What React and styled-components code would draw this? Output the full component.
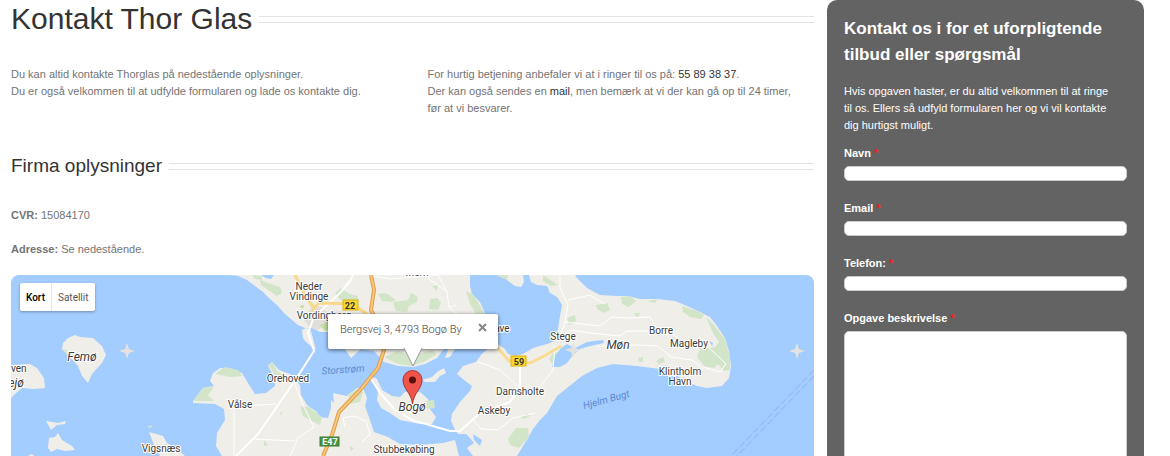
import React from "react";
import styled, { createGlobalStyle } from "styled-components";

const places = [
  { name: "Neder", x: 309, y: 290 },
  { name: "Vindinge", x: 309, y: 300 },
  { name: "Vordingborg", x: 324, y: 319 },
  { name: "Orehoved", x: 288, y: 382 },
  { name: "Vålse", x: 240, y: 408 },
  { name: "Vigsnæs", x: 161, y: 452 },
  { name: "Stubbekøbing", x: 404, y: 453 },
  { name: "Kalvehave", x: 487, y: 332 },
  { name: "Mern", x: 417, y: 276 },
  { name: "Stege", x: 563, y: 340 },
  { name: "Damsholte", x: 520, y: 395 },
  { name: "Askeby", x: 494, y: 414 },
  { name: "Borre", x: 661, y: 334 },
  { name: "Magleby", x: 689, y: 347 },
  { name: "Klintholm", x: 680, y: 375 },
  { name: "Havn", x: 680, y: 385 },
  { name: "Fejø", x: 13, y: 387, island: true },
  { name: "Raven", x: 13, y: 372 },
  { name: "Femø", x: 82, y: 361, island: true },
  { name: "Bogø", x: 412, y: 411, island: true },
  { name: "Møn", x: 618, y: 349, island: true },
];

const stars = [
  [127, 351],
  [797, 351],
  [573, 350],
];

const fields = [
  { id: "navn", label: "Navn", type: "text" },
  { id: "email", label: "Email", type: "email" },
  { id: "telefon", label: "Telefon:", type: "tel" },
];

const MapDrawing = () => (
  <Drawing viewBox="11 275 803 300" preserveAspectRatio="xMinYMin slice">
    <g fill="#f0eee9">
      <path d="M230 275L238 276L247 280L255 286L263 292L270 299L277 305L284 313L292 320L298 325L305 328L312 328L320 332L329 332L336 318L345 349L351 358L361 349L374 351L384 362L398 366L413 367L425 364L437 358L443 350L446 348L448 350L445 358L450 357L455 349L468 330L480 314L485 313L480 302L472 294L470 286L470 275Z" />
      <path d="M302 330L306 328L310 329L312 335L316 350L312 347L306 342L303 338Z" />
      <path d="M498 344L487 349L481 355L476 362L463 366L457 374L464 380L472 386L470 391L460 402L452 414L451 421L455 430L458 434L466 434L470 438L474 443L467 448L473 456L480 580L517 580L517 456L523 446L528 438L533 429L540 420L547 413L557 396L567 388L582 376L597 368L613 364L637 366L660 369L677 376L690 383L697 386L707 388L722 386L729 378L731 366L729 351L725 338L717 326L710 317L700 312L687 306L675 301L657 299L640 299L628 296L617 296L600 295L587 288L577 278L575 275L529 275L531 282L537 285L547 286L550 293L557 297L562 305L560 316L558 329L555 341L547 344L533 348L523 354L515 356L508 354L505 349Z" />
      <path d="M503 275L508 281L515 286L521 287L524 282L523 275Z" />
      <path d="M371 376L377 379L382 390L392 396L400 397L405 392L420 392L428 399L430 409L436 417L432 424L420 424L400 420L390 413L381 408L377 400L378 392Z" />
      <path d="M422 380L432 377L437 372L444 368L446 373L440 376L435 382L425 382Z" />
      <path d="M193 401L203 388L214 386L210 381L213 373L220 368L233 369L242 373L248 383L255 394L266 393L275 386L275 378L268 366L272 362L279 370L290 374L300 385L301 395L307 405L317 412L319 417L328 418L331 408L331 400L334 403L333 393L347 396L357 388L363 388L367 398L365 406L370 420L374 432L388 437L400 444L420 445L443 443L455 440L459 456L459 580L222 580L222 456L216 446L217 433L225 420L224 409L215 404L193 403Z" />
      <path d="M63 343L68 338L75 335L80 337L93 338L102 346L106 355L102 363L92 374L88 383L82 376L78 366L68 355L62 349Z" />
      <path d="M11 365L30 364L37 368L44 378L45 388L34 389L22 388L15 394L11 398Z" />
      <path d="M46 421L58 423L66 421L65 424L57 425L51 430Z" />
      <path d="M49 438L55 437L58 433L62 440L72 446L75 450L65 451L57 449L51 452L48 448Z" />
      <path d="M149 432L156 434L163 436L167 443L177 449L185 456L195 580L160 580L160 456L154 445Z" />
      <path d="M28 456L32 454L34 456Z" />
    </g>
    <path
      fill="#e2dfda"
      d="M304 320L312 306L322 307L330 315L326 327L316 330L309 327Z"
    />
    <g fill="#d3e5c9">
      <path d="M260 280L268 283L280 287L282 293L277 296L268 290L261 285ZM252 275L262 276L262 280L255 279Z" />
      <path d="M335 293L341 288L350 294L358 296L358 300L346 301L339 299Z" />
      <path d="M378 294L386 293L396 300L392 302L382 301ZM393 302L408 300L411 293L418 297L417 302L409 306L407 312L396 311ZM430 299L437 298L441 303L438 310L429 309Z" />
      <path d="M466 291L473 294L478 302L485 314L476 314L470 304ZM432 286L438 285L437 291ZM496 275L508 275L507 280Z" />
      <path d="M384 357L398 351L412 356L432 350L437 354L424 362L412 366L398 364Z" />
      <path d="M215 374L225 367L238 370L242 376L230 377L221 375Z" />
      <path d="M193 401L203 388L214 387L208 395L214 401Z" />
      <path d="M268 364L273 363L277 371L288 378L284 380L274 374Z" />
      <path d="M300 406L309 407L322 417L320 425L308 419L303 416Z" />
      <path d="M348 394L358 389L363 392L360 402L350 404ZM280 413L283 411L281 416ZM264 440L268 445L264 446Z" />
      <path d="M425 401L434 400L435 408L427 409ZM349 446L354 448L351 451Z" />
      <path d="M508 439L516 428L528 428L529 437L519 448L510 445Z" />
      <path d="M520 417L527 413L530 416L524 419ZM553 353L560 352L552 364L549 359Z" />
      <path d="M567 318L575 315L576 321L569 325ZM596 305L607 303L610 310L604 313L597 309Z" />
      <path d="M621 297L630 296L636 301L629 307L622 304ZM647 301L658 299L655 303ZM634 313L640 313L638 318Z" />
      <path d="M682 306L697 311L704 315L701 319L690 317L683 312Z" />
      <path d="M706 317L714 325L725 339L730 356L730 370L724 371L718 364L714 368L704 366L697 357L700 349L715 347L719 342L713 333Z" />
      <path d="M656 361L663 357L665 362L659 364ZM638 358L643 357L643 362L639 362Z" />
      <path d="M62 349L67 350L68 354ZM147 427L152 425L151 428Z" />
      <path d="M543 275L558 285L551 286L543 281Z" />
    </g>
    <path
      fill="#c5dfa0"
      d="M320 325L328 322L331 328L325 331ZM299 306L304 305L303 309ZM313 315L317 314L316 318Z"
    />
    <g fill="#a3ccff">
      <path d="M552 367L555 356L561 348L567 344L575 348L587 342L603 340L604 343L590 346L580 349L573 355L567 363L560 367Z" />
      <path d="M473 434L482 440L480 446L474 440ZM549 314L547 304L552 311Z" />
      <path d="M261 275L274 275L271 279L266 278ZM709 341L713 343L712 346Z" />
    </g>
    <g fill="none" stroke="#fff" strokeLinejoin="round">
      <path
        strokeWidth="2"
        d="M236 456L258 434L294 382L314 351L308 333L314 317L340 293L350 281L353 275"
      />
      <path d="M294 382L303 405L314 427L298 438L290 456M254 439L295 441M234 409L234 456M242 406L276 404M345 427L343 418L354 416L366 421L370 434L362 442" />
      <path d="M370 275L390 279L438 275L447 292L449 307L462 318M447 292L428 278M449 307L456 305" />
      <path strokeWidth="2" d="M371 379L381 394L395 410L412 420L450 431L460 431L480 413L510 402L520 388L520 367" />
      <path d="M472 418L481 429L498 430L513 418L535 413M520 388L500 370L478 362M555 346L553 370L535 393" />
      <path d="M560 337L565 322L568 305L560 288L560 275M568 300L590 295L605 304M563 336L570 330L590 333L620 336L627 331L652 331L670 332L682 341L707 346L720 358L726 364L720 372L703 367" />
      <path d="M565 322L600 326L612 317L627 318L650 317L656 326M596 347L615 345L640 345L658 346L671 357L692 360L703 369" />
    </g>
    <g fill="none" strokeLinejoin="round">
      <path stroke="#f9d887" strokeWidth="3" d="M295 275L306 297L314 308L319 303L352 304L367 314M314 308L313 317" />
      <path stroke="#f9dc91" strokeWidth="3" d="M494 344L503 354L509 361L530 363L546 355L561 346" />
      <path stroke="#df9d4e" strokeWidth="4" d="M371 275L374 290L371 310L381 330L384 350L378 368L361 389L339 412L332 435L323 456" />
      <path stroke="#fac678" strokeWidth="2" d="M371 275L374 290L371 310L381 330L384 350L378 368L361 389L339 412L332 435L323 456" />
    </g>
    <g fill="none" stroke="#8eb1f1" strokeDasharray="7 3">
      <path d="M814 370L731 456" />
      <path d="M814 376L737 456" />
    </g>
    <g fill="#e4e2df">
      {stars.map(([x, y]) => (
        <path
          key={x}
          transform={`translate(${x} ${y})`}
          d="M0 -8L2 -2L8 0L2 2L0 8L-2 2L-8 0L-2 -2Z"
        />
      ))}
    </g>
    <g stroke="#d9b310">
      <rect x="343" y="300" width="15" height="10" fill="#fbd72b" />
      <rect x="511" y="356" width="15" height="10" fill="#fbd72b" />
      <rect x="320" y="437" width="19" height="9" fill="#4b9541" stroke="#3c7d34" />
    </g>
    <RoadNumber x="350" y="309">22</RoadNumber>
    <RoadNumber x="519" y="365">59</RoadNumber>
    <RoadNumber x="330" y="445" $light>E47</RoadNumber>
    {places.map((place) => (
      <Place key={place.name} x={place.x} y={place.y} $island={place.island}>
        {place.name}
      </Place>
    ))}
    <Sea x="343" y="373" transform="rotate(-4 343 369)">
      Storstrøm
    </Sea>
    <Sea x="606" y="403" transform="rotate(-15 606 399)">
      Hjelm Bugt
    </Sea>
    <path
      d="M412.500 404C411.500 393 403 389 403 380A9.500 9.500 0 0 1 422 380C422 389 413.500 393 412.500 404Z"
      fill="#f0534a"
      stroke="#a8352e"
    />
    <circle cx="412.500" cy="380" r="3.500" fill="#5b0f0d" />
  </Drawing>
);

const App = () => {
  return (
    <Page>
      <GlobalStyle />
      <Main>
        <TitleRow>
          <Title>Kontakt Thor Glas</Title>
          <Lines />
        </TitleRow>
        <Columns>
          <Text>
            Du kan altid kontakte Thorglas på nedestående oplysninger.
            <br />
            Du er også velkommen til at udfylde formularen og lade os kontakte dig.
          </Text>
          <Text>
            For hurtig betjening anbefaler vi at i ringer til os på:{" "}
            <Link href="tel:55893837">55 89 38 37</Link>.
            <br />
            Der kan også sendes en <Link href="#mail">mail</Link>, men bemærk at vi
            der kan gå op til 24 timer,
            <br />
            før at vi besvarer.
          </Text>
        </Columns>
        <SubtitleRow>
          <Subtitle>Firma oplysninger</Subtitle>
          <Lines />
        </SubtitleRow>
        <Facts>
          <Text>
            <strong>CVR:</strong> 15084170
          </Text>
          <Text>
            <strong>Adresse:</strong> Se nedestående.
          </Text>
        </Facts>
        <Map>
          <MapDrawing />
          <MapTypes>
            <MapType $active>Kort</MapType>
            <MapType>Satellit</MapType>
          </MapTypes>
          <Bubble>
            Bergsvej 3, 4793 Bogø By
            <Close aria-label="Luk">
              <svg width="9" height="9" viewBox="0 0 9 9">
                <path d="M1 1L8 8M8 1L1 8" stroke="#888" strokeWidth="2" />
              </svg>
            </Close>
            <Tail width="20" height="20" viewBox="0 0 20 20">
              <path d="M1 0L10 18L19 0" fill="#fff" stroke="#999" />
            </Tail>
          </Bubble>
        </Map>
      </Main>
      <Sidebar>
        <SidebarTitle>Kontakt os i for et uforpligtende tilbud eller spørgsmål</SidebarTitle>
        <Intro>
          Hvis opgaven haster, er du altid velkommen til at ringe
          <br />
          til os. Ellers så udfyld formularen her og vi vil kontakte
          <br />
          dig hurtigst muligt.
        </Intro>
        <Form>
          {fields.map((field) => (
            <Field key={field.id}>
              <Label htmlFor={field.id}>
                {field.label} <Required>*</Required>
              </Label>
              <Input id={field.id} type={field.type} />
            </Field>
          ))}
          <Field>
            <Label htmlFor="opgave">
              Opgave beskrivelse <Required>*</Required>
            </Label>
            <TextArea id="opgave" />
          </Field>
        </Form>
      </Sidebar>
    </Page>
  );
};

const GlobalStyle = createGlobalStyle`
  * {
    box-sizing: border-box;
  }

  body {
    margin: 0;
    background: #fff;
    color: #747474;
    font-family: "Liberation Sans", Arial, sans-serif;
    font-size: 11px;
    line-height: 17px;
  }
`;

const Page = styled.div`
  display: grid;
  grid-template-columns: minmax(0, 1fr) 317px;
  gap: 13px;
  padding: 0 26px 0 11px;
  height: 100vh;
  overflow: hidden;
`;

const Main = styled.main``;

const TitleRow = styled.div`
  display: flex;
  align-items: center;
  gap: 7px;
  height: 38px;
`;

const SubtitleRow = styled(TitleRow)`
  height: 24px;
  margin-top: 37px;
`;

const Title = styled.h1`
  margin: 0;
  color: #333;
  font-size: 30px;
  font-weight: 400;
  line-height: 38px;
`;

const Subtitle = styled.h2`
  margin: 0;
  color: #333;
  font-size: 19px;
  font-weight: 400;
  line-height: 24px;
`;

const Lines = styled.div`
  flex: 1;
  height: 7px;
  border-top: 1px solid #e3e3e3;
  border-bottom: 1px solid #e3e3e3;
`;

const Columns = styled.div`
  display: grid;
  grid-template-columns: 1fr 1fr;
  gap: 30px;
  margin-top: 28px;
`;

const Text = styled.p`
  margin: 0;
`;

const Link = styled.a`
  color: #333;
  text-decoration: none;
`;

const Facts = styled.div`
  display: grid;
  gap: 17px;
  margin: 29px 0 17px;
`;

const Map = styled.section`
  position: relative;
  height: 300px;
  overflow: hidden;
  border-radius: 8px;
  background: #a3ccff;
  font-family: Roboto, sans-serif;
`;

const Drawing = styled.svg`
  display: block;
  width: 100%;
  height: 100%;
`;

const Place = styled.text`
  fill: #3b3b3b;
  stroke: #fff;
  stroke-width: 2px;
  paint-order: stroke;
  text-anchor: middle;
  font-size: ${(props) => (props.$island ? "12px" : "10px")};
  font-style: ${(props) => (props.$island ? "italic" : "normal")};
`;

const Sea = styled.text`
  fill: #5b8ad0;
  text-anchor: middle;
  font-size: 10px;
  font-style: italic;
`;

const RoadNumber = styled.text`
  fill: ${(props) => (props.$light ? "#fff" : "#333")};
  text-anchor: middle;
  font-size: 9px;
  font-weight: 700;
`;

const MapTypes = styled.div`
  position: absolute;
  top: 8px;
  left: 9px;
  display: flex;
  height: 28px;
  border-radius: 2px;
  background: #fff;
  box-shadow: 0 1px 3px rgba(0, 0, 0, 0.3);
`;

const MapType = styled.button`
  padding: 0 6px;
  border: 0;
  background: none;
  color: ${(props) => (props.$active ? "#000" : "#565656")};
  font-family: inherit;
  font-size: 10px;
  font-weight: ${(props) => (props.$active ? 500 : 400)};

  & + & {
    border-left: 1px solid #e6e6e6;
  }
`;

const Bubble = styled.div`
  position: absolute;
  top: 39px;
  left: 317px;
  display: flex;
  justify-content: space-between;
  width: 170px;
  height: 35px;
  padding: 7px 10px 0 12px;
  border-radius: 2px;
  background: #fff;
  box-shadow: 0 1px 4px rgba(0, 0, 0, 0.6);
  color: #444;
  font-size: 11px;
  font-weight: 300;
`;

const Close = styled.button`
  display: flex;
  align-self: flex-start;
  padding: 2px 1px;
  border: 0;
  background: none;
`;

const Tail = styled.svg`
  position: absolute;
  top: 34px;
  left: 75px;
`;

const Sidebar = styled.aside`
  padding: 16px 17px;
  border-radius: 10px;
  background: #636363;
  color: #fff;
  height: 560px;
`;

const SidebarTitle = styled.h3`
  margin: 0 0 15px;
  font-size: 17px;
  line-height: 26px;
`;

const Intro = styled.p`
  margin: 0 0 11px;
`;

const Form = styled.form`
  display: grid;
  gap: 19px;
`;

const Field = styled.div`
  display: grid;
  gap: 4px;
`;

const Label = styled.label`
  font-weight: 700;
`;

const Required = styled.span`
  color: #ff1a1a;
`;

const Input = styled.input`
  width: 100%;
  height: 15px;
  padding: 0 6px;
  border: 1px solid #ccc;
  border-radius: 5px;
  background: #fff;
`;

const TextArea = styled.textarea`
  width: 100%;
  height: 200px;
  padding: 6px;
  border: 1px solid #ccc;
  border-radius: 5px;
  background: #fff;
  resize: none;
`;

export default App;
